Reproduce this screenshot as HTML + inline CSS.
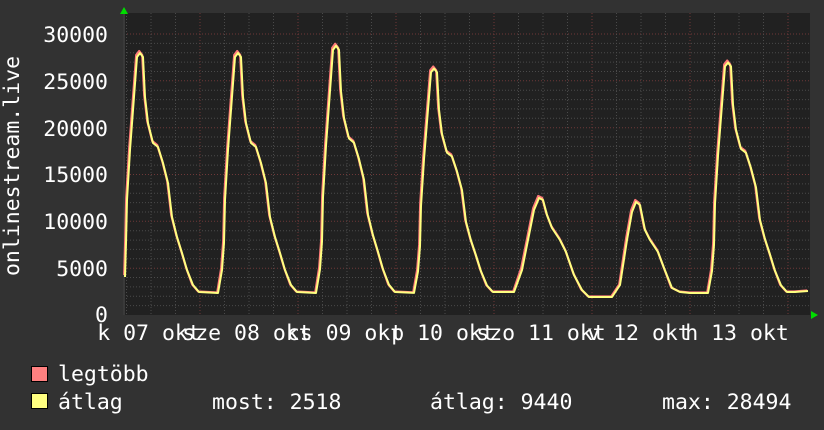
<!DOCTYPE html>
<html><head><meta charset="utf-8"><style>
html,body{margin:0;padding:0;background:#323232;}
svg{display:block}
text{font-family:"DejaVu Sans Mono","Liberation Mono",monospace;fill:#fff;font-size:21.5px}
</style></head><body>
<svg id="s" width="824" height="430" xmlns="http://www.w3.org/2000/svg">
<rect x="0" y="0" width="824" height="430" fill="#323232"/>
<rect x="124" y="13" width="686" height="302" fill="#212121"/>
<g id="grid"></g>
<path id="red" fill="none" stroke="#ff7a7a" stroke-width="2.2" stroke-linejoin="round"/>
<path id="yel" fill="none" stroke="#ffff80" stroke-width="2" stroke-linejoin="round"/>
<polygon points="120,14 128,14 124,7" fill="#00dd00"/>
<polygon points="811,311 811,319 818,315" fill="#00dd00"/>
<g text-anchor="end">
<text x="108" y="42">30000</text>
<text x="108" y="89">25000</text>
<text x="108" y="136">20000</text>
<text x="108" y="182">15000</text>
<text x="108" y="229">10000</text>
<text x="108" y="276">5000</text>
<text x="108" y="322">0</text>
</g>
<text transform="translate(19,166) rotate(-90)" text-anchor="middle">onlinestream.live</text>
<g text-anchor="middle">
<text x="149" y="340">k 07 okt</text>
<text x="247" y="340">sze 08 okt</text>
<text x="345" y="340">cs 09 okt</text>
<text x="443" y="340">p 10 okt</text>
<text x="541" y="340">szo 11 okt</text>
<text x="639" y="340">v 12 okt</text>
<text x="737" y="340">h 13 okt</text>
</g>
<rect x="31.5" y="366.5" width="16" height="15" fill="#ff8080" stroke="#000"/>
<rect x="31.5" y="393.5" width="16" height="15" fill="#ffff80" stroke="#000"/>
<text x="58" y="381">legtöbb</text>
<text x="58" y="409">átlag</text>
<text x="212" y="409">most: 2518</text>
<text x="430" y="409">átlag: 9440</text>
<text x="662" y="409">max: 28494</text>
</svg>
<script>
var g=document.getElementById('grid'),h='';
for(var v=1000;v<=30000;v+=1000){var y=(315-v*281/30000).toFixed(1);
 h+='<line x1="124" x2="810" y1="'+y+'" y2="'+y+'" stroke="'+(v%5000?'#4a4a4a':'#6e3838')+'" stroke-dasharray="1,2"/>';}
for(var x=102+24.5;x<810;x+=24.5){var maj=Math.abs(((x-102)/98)%1)<0.01||Math.abs(((x-102)/98)%1-1)<0.01;
 if(x<125)continue;
 h+='<line y1="13" y2="315" x1="'+x.toFixed(1)+'" x2="'+x.toFixed(1)+'" stroke="'+(maj?'#6e3838':'#4a4a4a')+'" stroke-dasharray="1,2"/>';}
h+='<line x1="124" x2="124" y1="13" y2="315" stroke="#3a3a3a" stroke-width="2"/>';
g.innerHTML=h;
var T=[[18,293],[22,270],[24,243],[25,200],[28,150],[31,110],[35,57],[38,53],[41,57],[43,97],[46,123],[51,143],[56,147],[61,163],[66,183],[70,217],[75,237],[80,253],[85,270],[91,285],[97,292]];
var S5=[[20,292],[28,270],[35,235],[40,210],[45,198],[49,200],[53,215],[58,228],[66,240],[72,252],[80,275],[88,290],[95,297],[100,297]];
var S6=[[8,297],[20,297],[28,285],[35,240],[40,212],[44,202],[48,205],[53,230],[58,240],[66,252],[72,268],[80,288],[88,292],[98,293]];
var sc=[1,1,1.03,0.935,0,0,0.96];
var pts=[];
for(var k=0;k<7;k++){var d=102+98*k,t;
 if(k==4)t=S5;else if(k==5)t=S6;else t=T;
 t.forEach(function(p){var x=d+p[0],y=p[1];if(t===T)y=292-(292-y)*sc[k];if(x>=125)pts.push([x,y]);});}
pts.push([795,292]);pts.push([808,291]);
pts.unshift([125,277]);
var py='M'+pts.map(function(p){return p[0].toFixed(1)+','+p[1].toFixed(1)}).join(' L');
var pr='M'+pts.map(function(p){return (p[0]-0.8).toFixed(1)+','+(p[1]-(p[1]<280?2:0.5)).toFixed(1)}).join(' L');
document.getElementById('yel').setAttribute('d',py);
document.getElementById('red').setAttribute('d',pr);
</script>
</body></html>
